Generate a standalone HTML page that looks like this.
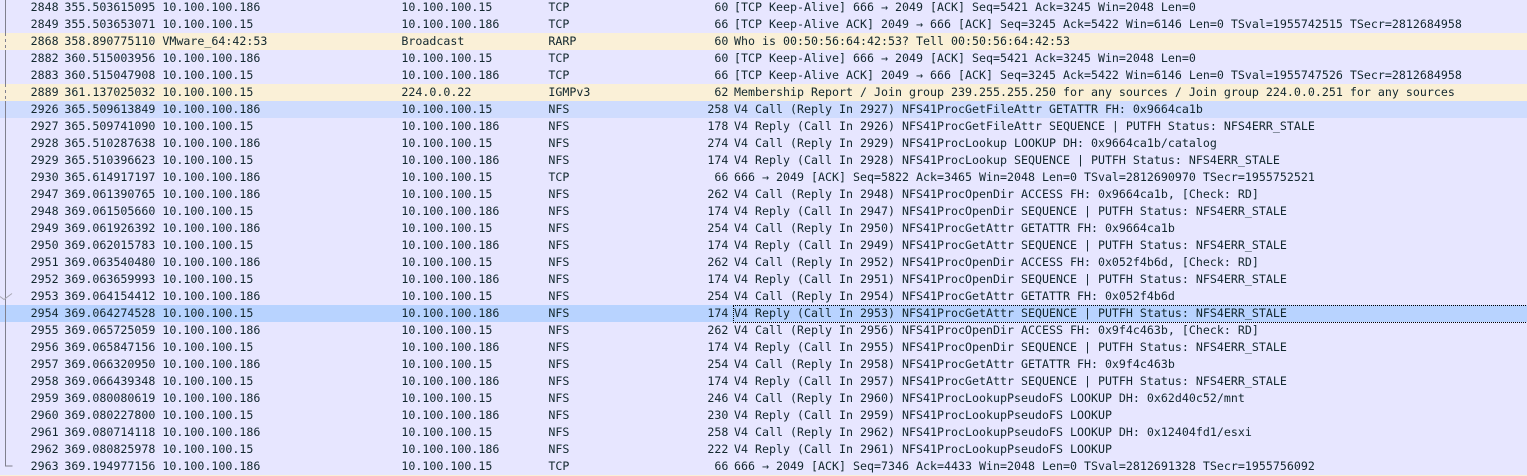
<!DOCTYPE html>
<html>
<head>
<meta charset="utf-8">
<style>
html,body{margin:0;padding:0;width:1527px;height:476px;overflow:hidden;background:#faf0d7}
#t{position:absolute;left:0;top:-1px;width:1527px;font:11.63px/17px "DejaVu Sans Mono","Liberation Mono",monospace;color:#12272e}
.r{position:relative;height:17px;background:#e7e6ff;white-space:pre}
.y{background:#faf0d7}
.c{background:#cfdcfe}
.s{background:#b8d3ff}
.r span{position:absolute;top:0}
.n{left:30px;width:28.6px;text-align:right}
.t{left:64.4px}
.a{left:162.4px}
.d{left:401.4px}
.p{left:548.4px}
.l{left:680px;width:48.4px;text-align:right}
.i{left:734px}
#f{position:absolute;left:733px;top:305px;width:793px;height:16px;border:1px dotted #000}
svg{position:absolute;left:0;top:0}
</style>
</head>
<body>
<div id="t">
<div class="r"><span class="n">2848</span><span class="t">355.503615095</span><span class="a">10.100.100.186</span><span class="d">10.100.100.15</span><span class="p">TCP</span><span class="l">60</span><span class="i">[TCP Keep-Alive] 666 → 2049 [ACK] Seq=5421 Ack=3245 Win=2048 Len=0</span></div>
<div class="r"><span class="n">2849</span><span class="t">355.503653071</span><span class="a">10.100.100.15</span><span class="d">10.100.100.186</span><span class="p">TCP</span><span class="l">66</span><span class="i">[TCP Keep-Alive ACK] 2049 → 666 [ACK] Seq=3245 Ack=5422 Win=6146 Len=0 TSval=1955742515 TSecr=2812684958</span></div>
<div class="r y"><span class="n">2868</span><span class="t">358.890775110</span><span class="a">VMware_64:42:53</span><span class="d">Broadcast</span><span class="p">RARP</span><span class="l">60</span><span class="i">Who is 00:50:56:64:42:53? Tell 00:50:56:64:42:53</span></div>
<div class="r"><span class="n">2882</span><span class="t">360.515003956</span><span class="a">10.100.100.186</span><span class="d">10.100.100.15</span><span class="p">TCP</span><span class="l">60</span><span class="i">[TCP Keep-Alive] 666 → 2049 [ACK] Seq=5421 Ack=3245 Win=2048 Len=0</span></div>
<div class="r"><span class="n">2883</span><span class="t">360.515047908</span><span class="a">10.100.100.15</span><span class="d">10.100.100.186</span><span class="p">TCP</span><span class="l">66</span><span class="i">[TCP Keep-Alive ACK] 2049 → 666 [ACK] Seq=3245 Ack=5422 Win=6146 Len=0 TSval=1955747526 TSecr=2812684958</span></div>
<div class="r y"><span class="n">2889</span><span class="t">361.137025032</span><span class="a">10.100.100.15</span><span class="d">224.0.0.22</span><span class="p">IGMPv3</span><span class="l">62</span><span class="i">Membership Report / Join group 239.255.255.250 for any sources / Join group 224.0.0.251 for any sources</span></div>
<div class="r c"><span class="n">2926</span><span class="t">365.509613849</span><span class="a">10.100.100.186</span><span class="d">10.100.100.15</span><span class="p">NFS</span><span class="l">258</span><span class="i">V4 Call (Reply In 2927) NFS41ProcGetFileAttr GETATTR FH: 0x9664ca1b</span></div>
<div class="r"><span class="n">2927</span><span class="t">365.509741090</span><span class="a">10.100.100.15</span><span class="d">10.100.100.186</span><span class="p">NFS</span><span class="l">178</span><span class="i">V4 Reply (Call In 2926) NFS41ProcGetFileAttr SEQUENCE | PUTFH Status: NFS4ERR_STALE</span></div>
<div class="r"><span class="n">2928</span><span class="t">365.510287638</span><span class="a">10.100.100.186</span><span class="d">10.100.100.15</span><span class="p">NFS</span><span class="l">274</span><span class="i">V4 Call (Reply In 2929) NFS41ProcLookup LOOKUP DH: 0x9664ca1b/catalog</span></div>
<div class="r"><span class="n">2929</span><span class="t">365.510396623</span><span class="a">10.100.100.15</span><span class="d">10.100.100.186</span><span class="p">NFS</span><span class="l">174</span><span class="i">V4 Reply (Call In 2928) NFS41ProcLookup SEQUENCE | PUTFH Status: NFS4ERR_STALE</span></div>
<div class="r"><span class="n">2930</span><span class="t">365.614917197</span><span class="a">10.100.100.186</span><span class="d">10.100.100.15</span><span class="p">TCP</span><span class="l">66</span><span class="i">666 → 2049 [ACK] Seq=5822 Ack=3465 Win=2048 Len=0 TSval=2812690970 TSecr=1955752521</span></div>
<div class="r"><span class="n">2947</span><span class="t">369.061390765</span><span class="a">10.100.100.186</span><span class="d">10.100.100.15</span><span class="p">NFS</span><span class="l">262</span><span class="i">V4 Call (Reply In 2948) NFS41ProcOpenDir ACCESS FH: 0x9664ca1b, [Check: RD]</span></div>
<div class="r"><span class="n">2948</span><span class="t">369.061505660</span><span class="a">10.100.100.15</span><span class="d">10.100.100.186</span><span class="p">NFS</span><span class="l">174</span><span class="i">V4 Reply (Call In 2947) NFS41ProcOpenDir SEQUENCE | PUTFH Status: NFS4ERR_STALE</span></div>
<div class="r"><span class="n">2949</span><span class="t">369.061926392</span><span class="a">10.100.100.186</span><span class="d">10.100.100.15</span><span class="p">NFS</span><span class="l">254</span><span class="i">V4 Call (Reply In 2950) NFS41ProcGetAttr GETATTR FH: 0x9664ca1b</span></div>
<div class="r"><span class="n">2950</span><span class="t">369.062015783</span><span class="a">10.100.100.15</span><span class="d">10.100.100.186</span><span class="p">NFS</span><span class="l">174</span><span class="i">V4 Reply (Call In 2949) NFS41ProcGetAttr SEQUENCE | PUTFH Status: NFS4ERR_STALE</span></div>
<div class="r"><span class="n">2951</span><span class="t">369.063540480</span><span class="a">10.100.100.186</span><span class="d">10.100.100.15</span><span class="p">NFS</span><span class="l">262</span><span class="i">V4 Call (Reply In 2952) NFS41ProcOpenDir ACCESS FH: 0x052f4b6d, [Check: RD]</span></div>
<div class="r"><span class="n">2952</span><span class="t">369.063659993</span><span class="a">10.100.100.15</span><span class="d">10.100.100.186</span><span class="p">NFS</span><span class="l">174</span><span class="i">V4 Reply (Call In 2951) NFS41ProcOpenDir SEQUENCE | PUTFH Status: NFS4ERR_STALE</span></div>
<div class="r"><span class="n">2953</span><span class="t">369.064154412</span><span class="a">10.100.100.186</span><span class="d">10.100.100.15</span><span class="p">NFS</span><span class="l">254</span><span class="i">V4 Call (Reply In 2954) NFS41ProcGetAttr GETATTR FH: 0x052f4b6d</span></div>
<div class="r s"><span class="n">2954</span><span class="t">369.064274528</span><span class="a">10.100.100.15</span><span class="d">10.100.100.186</span><span class="p">NFS</span><span class="l">174</span><span class="i">V4 Reply (Call In 2953) NFS41ProcGetAttr SEQUENCE | PUTFH Status: NFS4ERR_STALE</span></div>
<div class="r"><span class="n">2955</span><span class="t">369.065725059</span><span class="a">10.100.100.186</span><span class="d">10.100.100.15</span><span class="p">NFS</span><span class="l">262</span><span class="i">V4 Call (Reply In 2956) NFS41ProcOpenDir ACCESS FH: 0x9f4c463b, [Check: RD]</span></div>
<div class="r"><span class="n">2956</span><span class="t">369.065847156</span><span class="a">10.100.100.15</span><span class="d">10.100.100.186</span><span class="p">NFS</span><span class="l">174</span><span class="i">V4 Reply (Call In 2955) NFS41ProcOpenDir SEQUENCE | PUTFH Status: NFS4ERR_STALE</span></div>
<div class="r"><span class="n">2957</span><span class="t">369.066320950</span><span class="a">10.100.100.186</span><span class="d">10.100.100.15</span><span class="p">NFS</span><span class="l">254</span><span class="i">V4 Call (Reply In 2958) NFS41ProcGetAttr GETATTR FH: 0x9f4c463b</span></div>
<div class="r"><span class="n">2958</span><span class="t">369.066439348</span><span class="a">10.100.100.15</span><span class="d">10.100.100.186</span><span class="p">NFS</span><span class="l">174</span><span class="i">V4 Reply (Call In 2957) NFS41ProcGetAttr SEQUENCE | PUTFH Status: NFS4ERR_STALE</span></div>
<div class="r"><span class="n">2959</span><span class="t">369.080080619</span><span class="a">10.100.100.186</span><span class="d">10.100.100.15</span><span class="p">NFS</span><span class="l">246</span><span class="i">V4 Call (Reply In 2960) NFS41ProcLookupPseudoFS LOOKUP DH: 0x62d40c52/mnt</span></div>
<div class="r"><span class="n">2960</span><span class="t">369.080227800</span><span class="a">10.100.100.15</span><span class="d">10.100.100.186</span><span class="p">NFS</span><span class="l">230</span><span class="i">V4 Reply (Call In 2959) NFS41ProcLookupPseudoFS LOOKUP</span></div>
<div class="r"><span class="n">2961</span><span class="t">369.080714118</span><span class="a">10.100.100.186</span><span class="d">10.100.100.15</span><span class="p">NFS</span><span class="l">258</span><span class="i">V4 Call (Reply In 2962) NFS41ProcLookupPseudoFS LOOKUP DH: 0x12404fd1/esxi</span></div>
<div class="r"><span class="n">2962</span><span class="t">369.080825978</span><span class="a">10.100.100.15</span><span class="d">10.100.100.186</span><span class="p">NFS</span><span class="l">222</span><span class="i">V4 Reply (Call In 2961) NFS41ProcLookupPseudoFS LOOKUP</span></div>
<div class="r"><span class="n">2963</span><span class="t">369.194977156</span><span class="a">10.100.100.186</span><span class="d">10.100.100.15</span><span class="p">TCP</span><span class="l">66</span><span class="i">666 → 2049 [ACK] Seq=7346 Ack=4433 Win=2048 Len=0 TSval=2812691328 TSecr=1955756092</span></div>
</div>
<div id="f"></div>
<svg width="20" height="476" viewBox="0 0 20 476" fill="none" stroke="#80808e" stroke-width="1">
<path d="M5.5 0V33M5.5 50V84M5.5 101V466H12.5"/>
<path d="M5.5 33V50M5.5 84V101" stroke-dasharray="3 3"/>
<path d="M0 296.5L4 299.5L12 293.5" stroke="#a8a8b4"/>
</svg>
</body>
</html>
